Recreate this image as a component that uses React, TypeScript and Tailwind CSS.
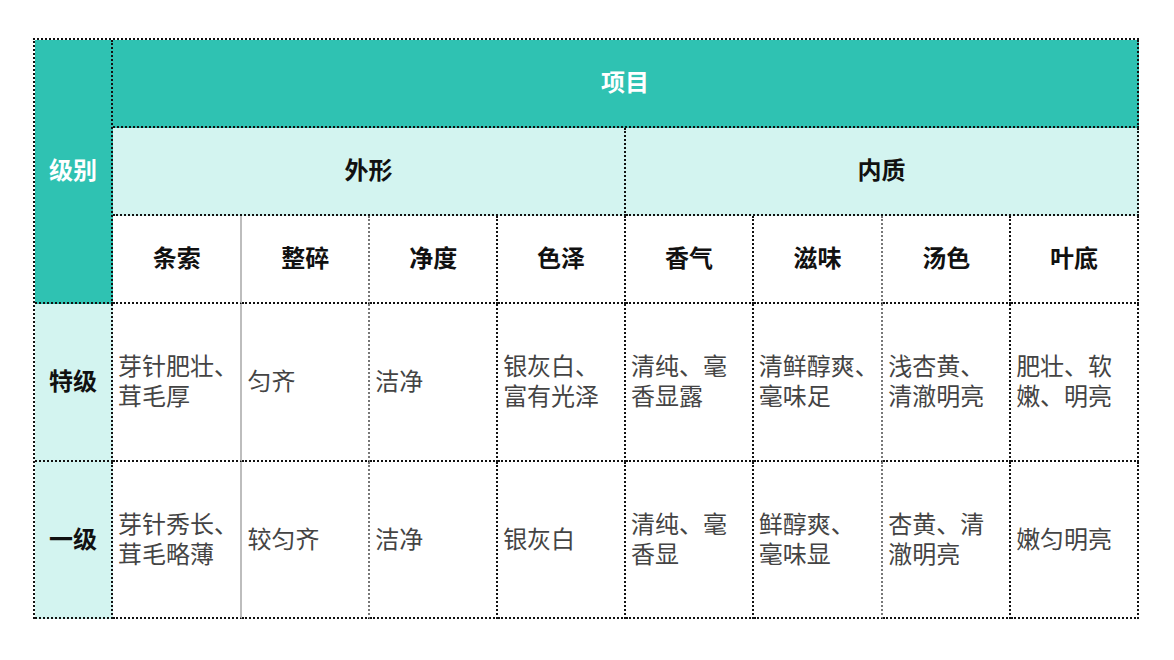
import React from "react";

const font = { fontFamily: '"Noto Sans CJK SC", "Noto Sans", sans-serif' };

const heads = ["条索", "整碎", "净度", "色泽", "香气", "滋味", "汤色", "叶底"];
const rows: { level: string; cells: string[][] }[] = [
  {
    level: "特级",
    cells: [
      ["芽针肥壮、", "茸毛厚"],
      ["匀齐"],
      ["洁净"],
      ["银灰白、", "富有光泽"],
      ["清纯、毫", "香显露"],
      ["清鲜醇爽、", "毫味足"],
      ["浅杏黄、", "清澈明亮"],
      ["肥壮、软", "嫩、明亮"],
    ],
  },
  {
    level: "一级",
    cells: [
      ["芽针秀长、", "茸毛略薄"],
      ["较匀齐"],
      ["洁净"],
      ["银灰白"],
      ["清纯、毫", "香显"],
      ["鲜醇爽、", "毫味显"],
      ["杏黄、清", "澈明亮"],
      ["嫩匀明亮"],
    ],
  },
];

const widthClass: Record<number, string> = {
  2: "w-[5em]",
  3: "w-[5em]",
  4: "w-[4.2em]",
  5: "w-[5.1em]",
};

const rightBorder = (i: number) =>
  i === 0
    ? "border-r-2 border-r-[#bdbdbd] border-solid"
    : i === 1 || i === 5
    ? "border-r-2 border-r-[#777] border-dotted"
    : "border-r-2 border-r-[#111] border-dotted";

export default function App() {
  return (
    <div className="w-[1174px] h-[660px] bg-white pl-[33px] pt-[38px]" style={font}>
      <div
        className="grid w-[1106px] border-l-2 border-t-2 border-dotted border-[#111]"
        style={{ gridTemplateColumns: "78px repeat(8, 1fr)", gridTemplateRows: "88px 88px 88px 158px 157px" }}
      >
        <div className="row-span-3 bg-[#2fc2b2] flex items-center justify-center pb-[4px] text-white font-bold text-[24px] border-r-2 border-b-2 border-dotted border-[#111]">
          级别
        </div>
        <div className="col-span-8 bg-[#2fc2b2] flex items-center justify-center pb-[4px] text-white font-bold text-[24px] border-r-2 border-b-2 border-dotted border-[#111]">
          项目
        </div>
        <div className="col-span-4 bg-[#d3f4f0] flex items-center justify-center pb-[4px] text-[#111] font-bold text-[24px] border-r-2 border-b-2 border-dotted border-[#111]">
          外形
        </div>
        <div className="col-span-4 bg-[#d3f4f0] flex items-center justify-center pb-[4px] text-[#111] font-bold text-[24px] border-r-2 border-b-2 border-dotted border-[#111]">
          内质
        </div>
        {heads.map((h, i) => (
          <div
            key={h}
            className={`flex items-center justify-center pb-[4px] text-[#111] font-bold text-[24px] border-b-2 border-b-[#111] ${rightBorder(i)}`}
            style={{ borderBottomStyle: "dotted" }}
          >
            {h}
          </div>
        ))}
        {rows.map((r) => (
          <React.Fragment key={r.level}>
            <div className="bg-[#d3f4f0] flex items-center justify-center pb-[4px] text-[#111] font-bold text-[24px] border-r-2 border-b-2 border-dotted border-[#111]">
              {r.level}
            </div>
            {r.cells.map((c, i) => (
              <div
                key={i}
                className={`flex flex-col justify-center pl-[5px] pb-[4px] text-[#444] text-[24px] leading-[30px] border-b-2 border-b-[#111] ${rightBorder(i)}`}
                style={{ borderBottomStyle: "dotted" }}
              >
                <p className={widthClass[c[0].length] ?? "w-[5em]"}>{c.join("")}</p>
              </div>
            ))}
          </React.Fragment>
        ))}
      </div>
    </div>
  );
}
